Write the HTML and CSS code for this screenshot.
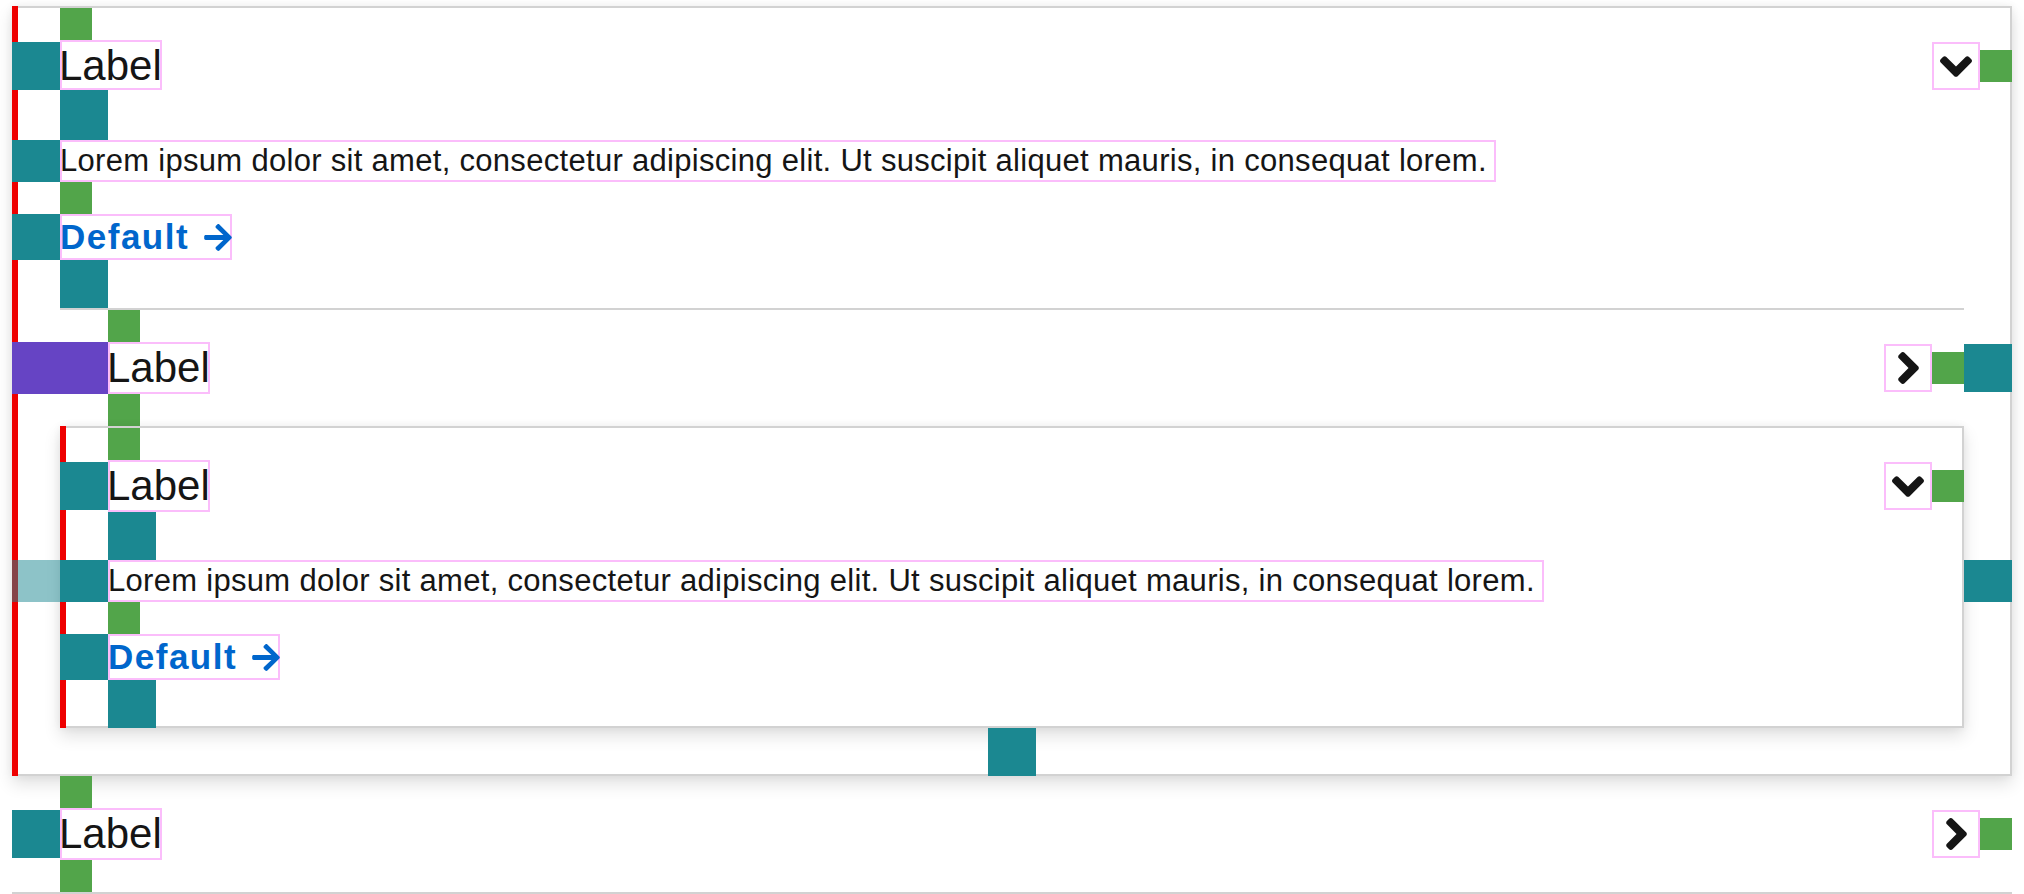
FILE: index.html
```html
<!DOCTYPE html>
<html lang="en">
<head>
<meta charset="utf-8">
<title>Spacing</title>
<link rel="stylesheet" href="styles.css">
</head>
<body>
<div class="page">
  <div class="card">
    <div class="item">
      <div class="blk green w32 h32 in1"></div>
      <div class="row row-end">
        <div class="blk teal w48 h48"></div>
        <div class="label label-first">Label</div>
        <div class="push">
          <div class="toggle">
            <svg class="ico-down" viewBox="0 152 320 208" width="32" height="21" aria-hidden="true"><path d="M143 352.3L7 216.3c-9.4-9.4-9.4-24.6 0-33.9l22.6-22.6c9.4-9.4 24.6-9.4 33.9 0l96.4 96.4 96.4-96.4c9.4-9.4 24.6-9.4 33.9 0l22.6 22.6c9.4 9.4 9.4 24.6 0 33.9l-136 136c-9.4 9.5-24.6 9.5-34 .1z"/></svg>
          </div>
          <div class="blk green w32 h32"></div>
        </div>
      </div>
      <div class="blk teal w48 h50 in1"></div>
      <div class="row">
        <div class="blk teal w48 h42"></div>
        <p class="desc">Lorem ipsum dolor sit amet, consectetur adipiscing elit. Ut suscipit aliquet mauris, in consequat lorem.</p>
      </div>
      <div class="blk green w32 h32 in1"></div>
      <div class="row">
        <div class="blk teal w48 h46"></div>
        <a class="link" href="#">Default<svg viewBox="0 37 448 438" width="28" height="27" aria-hidden="true"><path d="M190.5 66.9l22.2-22.2c9.4-9.4 24.6-9.4 33.9 0L441 239c9.4 9.4 9.4 24.6 0 33.9L246.6 467.3c-9.4 9.4-24.6 9.4-33.9 0l-22.2-22.2c-9.5-9.5-9.3-25 .4-34.3L311.4 296H24c-13.3 0-24-10.7-24-24v-32c0-13.3 10.7-24 24-24h287.4L190.9 101.2c-9.8-9.3-10-24.8-.4-34.3z"/></svg></a>
      </div>
      <div class="blk teal w48 h48 in1"></div>
      <div class="divider"></div>
    </div>

    <div class="item">
      <div class="blk green w32 h32 in2"></div>
      <div class="row">
        <div class="blk purple w96 h52"></div>
        <div class="label">Label</div>
        <div class="push">
          <div class="toggle">
            <svg class="ico-right" viewBox="24 96 208 320" width="21" height="32" aria-hidden="true"><path d="M224.3 273l-136 136c-9.4 9.4-24.6 9.4-33.9 0l-22.6-22.6c-9.4-9.4-9.4-24.6 0-33.9l96.4-96.4-96.4-96.4c-9.4-9.4-9.4-24.6 0-33.9L54.3 103c9.4-9.4 24.6-9.4 33.9 0l136 136c9.5 9.4 9.5 24.6.1 34z"/></svg>
          </div>
          <div class="blk green w32 h32"></div>
          <div class="blk teal w48 h48"></div>
        </div>
      </div>
      <div class="blk green w32 h32 in2"></div>

      <div class="nested">
        <div class="blk green w32 h32 in1"></div>
        <div class="row">
          <div class="blk teal w48 h48"></div>
          <div class="label">Label</div>
          <div class="push">
            <div class="toggle">
              <svg class="ico-down" viewBox="0 152 320 208" width="32" height="21" aria-hidden="true"><path d="M143 352.3L7 216.3c-9.4-9.4-9.4-24.6 0-33.9l22.6-22.6c9.4-9.4 24.6-9.4 33.9 0l96.4 96.4 96.4-96.4c9.4-9.4 24.6-9.4 33.9 0l22.6 22.6c9.4 9.4 9.4 24.6 0 33.9l-136 136c-9.4 9.5-24.6 9.5-34 .1z"/></svg>
            </div>
            <div class="blk green w32 h32"></div>
          </div>
        </div>
        <div class="blk teal w48 h48 in1"></div>
        <div class="row wide">
          <div class="blk lteal w48 h42"></div>
          <div class="blk teal w48 h42"></div>
          <p class="desc">Lorem ipsum dolor sit amet, consectetur adipiscing elit. Ut suscipit aliquet mauris, in consequat lorem.</p>
          <div class="push">
            <div class="blk teal w48 h42"></div>
          </div>
        </div>
        <div class="blk green w32 h32 in1"></div>
        <div class="row">
          <div class="blk teal w48 h46"></div>
          <a class="link" href="#">Default<svg viewBox="0 37 448 438" width="28" height="27" aria-hidden="true"><path d="M190.5 66.9l22.2-22.2c9.4-9.4 24.6-9.4 33.9 0L441 239c9.4 9.4 9.4 24.6 0 33.9L246.6 467.3c-9.4 9.4-24.6 9.4-33.9 0l-22.2-22.2c-9.5-9.5-9.3-25 .4-34.3L311.4 296H24c-13.3 0-24-10.7-24-24v-32c0-13.3 10.7-24 24-24h287.4L190.9 101.2c-9.8-9.3-10-24.8-.4-34.3z"/></svg></a>
        </div>
        <div class="blk teal w48 h48 in1"></div>
      </div>

      <div class="center">
        <div class="blk teal w48 h48"></div>
      </div>
    </div>
  </div>

  <div class="item item-plain">
    <div class="blk green w32 h32 in1"></div>
    <div class="row">
      <div class="blk teal w48 h48"></div>
      <div class="label">Label</div>
      <div class="push">
        <div class="toggle">
          <svg class="ico-right" viewBox="24 96 208 320" width="21" height="32" aria-hidden="true"><path d="M224.3 273l-136 136c-9.4 9.4-24.6 9.4-33.9 0l-22.6-22.6c-9.4-9.4-9.4-24.6 0-33.9l96.4-96.4-96.4-96.4c-9.4-9.4-9.4-24.6 0-33.9L54.3 103c9.4-9.4 24.6-9.4 33.9 0l136 136c9.5 9.4 9.5 24.6.1 34z"/></svg>
        </div>
        <div class="blk green w32 h32"></div>
      </div>
    </div>
    <div class="blk green w32 h32 in1"></div>
  </div>
</div>
</body>
</html>
```

FILE: styles.css
```css
* {
  box-sizing: border-box;
  margin: 0;
  padding: 0;
}

html,
body {
  background: #fff;
}

body {
  margin: 0;
  font-family: "Liberation Sans", Arial, sans-serif;
  color: #151515;
}

.page {
  padding: 6px 12px 0;
}

.card {
  padding-top: 2px;
  background: #fff;
  box-shadow:
    inset 6px 0 0 #ee0000,
    inset 0 2px 0 #d2d2d2,
    inset -2px 0 0 #d2d2d2,
    inset 0 -2px 0 #d2d2d2,
    0 8px 16px rgba(3, 3, 3, 0.12),
    0 0 8px rgba(3, 3, 3, 0.06);
}

.nested {
  margin: 0 48px;
  padding-top: 2px;
  background: #fff;
  box-shadow:
    inset 6px 0 0 #ee0000,
    inset 0 2px 0 #d2d2d2,
    inset -2px 0 0 #d2d2d2,
    inset 0 -2px 0 #d2d2d2,
    0 8px 16px rgba(3, 3, 3, 0.12),
    0 0 8px rgba(3, 3, 3, 0.06);
}

.blk {
  flex-shrink: 0;
}

.teal { background: #1b8891; }
.green { background: #52a54a; }
.purple { background: #6644c4; }
.lteal { background: rgba(27, 136, 145, 0.5); }

.w32 { width: 32px; }
.w48 { width: 48px; }
.w96 { width: 96px; }

.h32 { height: 32px; }
.h42 { height: 42px; }
.h46 { height: 46px; }
.h48 { height: 48px; }
.h50 { height: 50px; }
.h52 { height: 52px; }

.in1 { margin-left: 48px; }
.in2 { margin-left: 96px; }

.row {
  display: flex;
  align-items: center;
}

.row-end {
  align-items: flex-end;
}

.wide {
  margin: 0 -48px;
}

.push {
  margin-left: auto;
  display: flex;
  align-items: center;
}

.label {
  flex-shrink: 0;
  height: 52px;
  padding: 2px 0;
  font-size: 42px;
  line-height: 48px;
  white-space: nowrap;
  text-indent: -1px;
  box-shadow: inset 0 0 0 2px #fbbdfb;
}

.label-first {
  height: 50px;
  padding-bottom: 0;
}

.desc {
  flex-shrink: 0;
  height: 42px;
  padding-right: 9px;
  font-size: 31px;
  line-height: 42px;
  letter-spacing: 0.3px;
  white-space: nowrap;
  box-shadow: inset 0 0 0 2px #fbbdfb;
}

.link {
  flex-shrink: 0;
  display: flex;
  align-items: center;
  gap: 15px;
  height: 46px;
  font-size: 35px;
  line-height: 46px;
  font-weight: 700;
  letter-spacing: 1.5px;
  color: #0066cc;
  text-decoration: none;
  white-space: nowrap;
  box-shadow: inset 0 0 0 2px #fbbdfb;
}

.link svg {
  fill: #0066cc;
  display: block;
}

.toggle {
  flex-shrink: 0;
  width: 48px;
  height: 48px;
  display: flex;
  align-items: center;
  justify-content: center;
  box-shadow: inset 0 0 0 2px #fbbdfb;
}

.toggle svg {
  fill: #151515;
  display: block;
}

.divider {
  height: 2px;
  margin: 0 48px;
  background: #d2d2d2;
}

.center {
  display: flex;
  justify-content: center;
}

.item-plain {
  border-bottom: 2px solid #d2d2d2;
}
```
